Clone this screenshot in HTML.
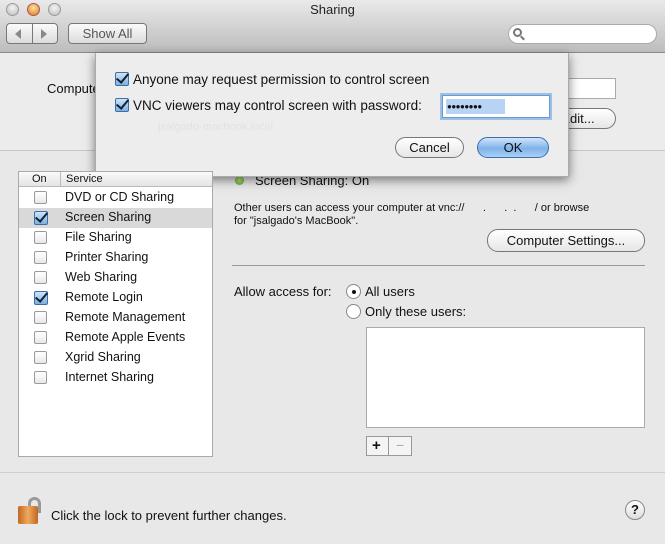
<!DOCTYPE html>
<html><head><style>
*{margin:0;padding:0;box-sizing:border-box}
body{width:665px;height:544px;overflow:hidden;background:#e8e8e8;font-family:"Liberation Sans",sans-serif;font-size:12px;color:#111;position:relative}
.a{position:absolute}
.tb{left:0;top:0;width:665px;height:53px;background:linear-gradient(#e9e9e9,#bdbdbd);border-bottom:1px solid #8a8a8a}
.light{left:0;top:53px;width:665px;height:98px;background:#ececec;border-bottom:1px solid #c8c8c8}
.tl{width:13px;height:13px;border-radius:50%;top:3px;background:radial-gradient(circle at 50% 35%,#f4f4f4,#bcbcbc);border:1px solid #9a9a9a}
.btn{border:1px solid #777;border-radius:4px;background:linear-gradient(#fbfbfb,#dcdcdc);text-align:center}
.rbtn{border:1px solid #777;border-radius:11px;background:linear-gradient(#fff,#e6e6e6);text-align:center;font-size:13px}
.cb{width:13px;height:13px;border:1px solid #9a9a9a;border-radius:2px;background:linear-gradient(#fff,#e8e8e8)}
.ck{width:14px;height:14px;border:1px solid #3a6fa8;border-radius:2px;background:linear-gradient(#cfe3f7,#7fb0e0)}
.ck::after{content:"";position:absolute;left:3px;top:-2px;width:5px;height:10px;border:solid #123;border-width:0 2px 2px 0;transform:rotate(40deg)}
.row{left:19px;width:193px;height:20px;font-size:12.5px}
.row span{position:absolute;left:46px;top:2px}
.row .cb{position:absolute;left:15px;top:3px}
.row .ck{position:absolute;left:15px;top:3px}
</style></head><body>
<div class="a tb"></div>
<div class="a tl" style="left:6px"></div>
<div class="a tl" style="left:27px;background:radial-gradient(circle at 50% 35%,#ffe0a0,#e07818);border-color:#a55"></div>
<div class="a tl" style="left:48px"></div>
<div class="a" style="left:0;top:2px;width:665px;text-align:center;font-size:13px;color:#222">Sharing</div>
<div class="a btn" style="left:6px;top:23px;width:52px;height:21px"></div>
<div class="a" style="left:32px;top:23px;width:1px;height:21px;background:#777"></div>
<div class="a" style="left:15px;top:29px;width:0;height:0;border:5px solid transparent;border-right:6px solid #888;border-left:0"></div>
<div class="a" style="left:41px;top:29px;width:0;height:0;border:5px solid transparent;border-left:6px solid #888;border-right:0"></div>
<div class="a btn" style="left:68px;top:23px;width:79px;height:21px;line-height:19px;font-size:13px;color:#555">Show All</div>
<div class="a" style="left:508px;top:24px;width:149px;height:20px;border-radius:10px;background:#fff;border:1px solid #aaa"></div>
<div class="a" style="left:513px;top:28px;width:9px;height:9px;border:2px solid #777;border-radius:50%"></div>
<div class="a" style="left:520px;top:37px;width:5px;height:2px;background:#777;transform:rotate(45deg)"></div>
<div class="a light"></div>
<div class="a" style="left:47px;top:81px;font-size:13px">Computer Name:</div>
<div class="a" style="left:560px;top:78px;width:56px;height:21px;background:#fff;border:1px solid #aaa"></div>
<div class="a rbtn" style="left:540px;top:108px;width:76px;height:21px;line-height:19px">Edit...</div>
<!-- status below sheet (clipped) -->
<div class="a" style="left:232px;top:172px;width:200px;height:18px;overflow:hidden">
<div class="a" style="left:3px;top:4px;width:9px;height:9px;border-radius:50%;background:radial-gradient(circle at 50% 40%,#c8f080,#4a9a20)"></div>
<div class="a" style="left:23px;top:1px;font-size:13px;white-space:nowrap">Screen Sharing: On</div>
</div>
<!-- sheet -->
<div class="a" style="left:95px;top:53px;width:474px;height:124px;background:#ededed;box-shadow:0 3px 10px rgba(0,0,0,.5);border:1px solid #aaa;border-top:0"></div>
<div class="a" style="left:158px;top:121px;font-size:11px;color:#e2e2e2">jsalgado-macbook.local</div>
<div class="a ck" style="left:115px;top:72px"></div>
<div class="a" style="left:133px;top:72px;font-size:13.5px">Anyone may request permission to control screen</div>
<div class="a ck" style="left:115px;top:98px"></div>
<div class="a" style="left:133px;top:98px;font-size:13.5px">VNC viewers may control screen with password:</div>
<div class="a" style="left:442px;top:95px;width:108px;height:23px;background:#fff;border:1px solid #6a9ad0;box-shadow:0 0 0 2px #9cc0e8"></div>
<div class="a" style="left:446px;top:99px;width:59px;height:15px;background:#b8d4f4;font-size:8px;line-height:15px;letter-spacing:-0.5px;padding-left:1px">●●●●●●●●</div>
<div class="a rbtn" style="left:395px;top:137px;width:69px;height:21px;line-height:19px">Cancel</div>
<div class="a rbtn" style="left:477px;top:137px;width:72px;height:21px;line-height:19px;background:linear-gradient(#cfe5fb,#7fb3ea 55%,#a9d0f5);border-color:#3e6ea5">OK</div>
<!-- list -->
<div class="a" style="left:18px;top:171px;width:195px;height:286px;background:#fff;border:1px solid #aaa"></div>
<div class="a" style="left:19px;top:172px;width:193px;height:15px;background:linear-gradient(#fafafa,#e4e4e4);border-bottom:1px solid #bbb;font-size:11px"></div>
<div class="a" style="left:60px;top:172px;width:1px;height:15px;background:#bbb"></div>
<div class="a" style="left:32px;top:173px;font-size:11px">On</div>
<div class="a" style="left:66px;top:173px;font-size:11px">Service</div>
<div class="a row" style="top:188px"><div class="cb"></div><span>DVD or CD Sharing</span></div>
<div class="a row" style="top:208px;background:#d9d9d9"><div class="ck"></div><span>Screen Sharing</span></div>
<div class="a row" style="top:228px"><div class="cb"></div><span>File Sharing</span></div>
<div class="a row" style="top:248px"><div class="cb"></div><span>Printer Sharing</span></div>
<div class="a row" style="top:268px"><div class="cb"></div><span>Web Sharing</span></div>
<div class="a row" style="top:288px"><div class="ck"></div><span>Remote Login</span></div>
<div class="a row" style="top:308px"><div class="cb"></div><span>Remote Management</span></div>
<div class="a row" style="top:328px"><div class="cb"></div><span>Remote Apple Events</span></div>
<div class="a row" style="top:348px"><div class="cb"></div><span>Xgrid Sharing</span></div>
<div class="a row" style="top:368px"><div class="cb"></div><span>Internet Sharing</span></div>
<!-- right -->
<div class="a" style="left:234px;top:202px;font-size:11px;line-height:13px;width:420px">Other users can access your computer at vnc://&nbsp;&nbsp;&nbsp;&nbsp;&nbsp;&nbsp;.&nbsp;&nbsp;&nbsp;&nbsp;&nbsp;&nbsp;.&nbsp;&nbsp;.&nbsp;&nbsp;&nbsp;&nbsp;&nbsp;&nbsp;/ or browse<br>for "jsalgado's MacBook".</div>
<div class="a rbtn" style="left:487px;top:229px;width:158px;height:23px;line-height:21px">Computer Settings...</div>
<div class="a" style="left:232px;top:265px;width:413px;height:1px;background:#999"></div>
<div class="a" style="left:234px;top:284px;font-size:13px">Allow access for:</div>
<div class="a" style="left:346px;top:284px;width:15px;height:15px;border-radius:50%;border:1px solid #888;background:#fff"></div>
<div class="a" style="left:352px;top:290px;width:4px;height:4px;border-radius:50%;background:#111"></div>
<div class="a" style="left:365px;top:284px;font-size:13px">All users</div>
<div class="a" style="left:346px;top:304px;width:15px;height:15px;border-radius:50%;border:1px solid #888;background:#fff"></div>
<div class="a" style="left:365px;top:304px;font-size:13px">Only these users:</div>
<div class="a" style="left:366px;top:327px;width:279px;height:101px;background:#fff;border:1px solid #aaa"></div>
<div class="a" style="left:366px;top:436px;width:46px;height:20px;border:1px solid #999;background:#f4f4f4"></div>
<div class="a" style="left:388px;top:436px;width:1px;height:20px;background:#999"></div>
<div class="a" style="left:372px;top:437px;font-size:15px;font-weight:bold">+</div>
<div class="a" style="left:396px;top:437px;font-size:14px;color:#aaa">−</div>
<div class="a" style="left:0;top:472px;width:665px;height:1px;background:#cfcfcf"></div>
<!-- lock -->
<div class="a" style="left:28px;top:497px;width:13px;height:16px;border:3px solid #999;border-bottom:0;border-radius:7px 7px 0 0"></div>
<div class="a" style="left:18px;top:506px;width:20px;height:18px;background:linear-gradient(90deg,#c06820,#f0a860,#c06820);border-radius:2px"></div>
<div class="a" style="left:51px;top:508px;font-size:13px">Click the lock to prevent further changes.</div>
<div class="a" style="left:625px;top:500px;width:20px;height:20px;border-radius:50%;border:1px solid #888;background:linear-gradient(#fff,#ddd);text-align:center;font-size:13px;font-weight:bold;line-height:18px">?</div>
</body></html>
